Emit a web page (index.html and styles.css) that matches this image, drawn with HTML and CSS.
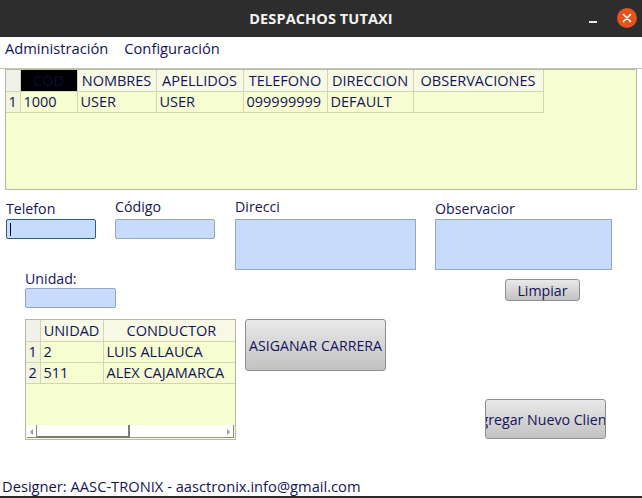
FILE: index.html
```html
<!DOCTYPE html>
<html lang="es">
<head>
<meta charset="utf-8">
<title>DESPACHOS TUTAXI</title>
<link rel="stylesheet" href="styles.css">
</head>
<body>
<div class="window">
  <header class="titlebar">
    <span class="title">DESPACHOS TUTAXI</span>
    <span class="minimize"></span>
    <span class="close">
      <svg width="10" height="10" viewBox="0 0 10 10"><path d="M1.5 1.5 L8.5 8.5 M8.5 1.5 L1.5 8.5" stroke="#fff" stroke-width="1.6" stroke-linecap="round"/></svg>
    </span>
  </header>
  <nav class="menubar">
    <span class="menu-item">Administración</span>
    <span class="menu-item">Configuración</span>
  </nav>
  <main class="main">
    <section class="grid-panel top-panel">
      <table class="grid top-grid">
        <colgroup>
          <col class="c-rh"><col class="c-cod"><col class="c-nom"><col class="c-ape"><col class="c-tel"><col class="c-dir"><col class="c-obs">
        </colgroup>
        <thead>
          <tr><th class="rh"></th><th class="sel">COD</th><th>NOMBRES</th><th>APELLIDOS</th><th>TELEFONO</th><th>DIRECCION</th><th>OBSERVACIONES</th></tr>
        </thead>
        <tbody>
          <tr><td class="rh">1</td><td>1000</td><td>USER</td><td>USER</td><td>099999999</td><td>DEFAULT</td><td></td></tr>
        </tbody>
      </table>
    </section>

    <section class="row1">
      <div class="field f-tel">
        <label class="lbl">Telefon</label>
        <div class="input focused"><span class="caret"></span></div>
      </div>
      <div class="field f-cod">
        <label class="lbl">Código</label>
        <div class="input"></div>
      </div>
      <div class="field f-dir">
        <label class="lbl">Direcci</label>
        <div class="input area"></div>
      </div>
      <div class="field f-obs">
        <label class="lbl">Observacior</label>
        <div class="input area"></div>
      </div>
    </section>

    <section class="row2">
      <div class="field f-uni">
        <label class="lbl">Unidad:</label>
        <div class="input"></div>
      </div>
      <button class="btn btn-limpiar"><span>Limpiar</span></button>
    </section>

    <section class="row3">
      <div class="grid-panel low-panel">
        <table class="grid low-grid">
          <colgroup><col class="c-rh"><col class="c-uni"><col class="c-con"></colgroup>
          <thead><tr><th class="rh"></th><th>UNIDAD</th><th>CONDUCTOR</th></tr></thead>
          <tbody>
            <tr><td class="rh">1</td><td>2</td><td>LUIS ALLAUCA</td></tr>
            <tr><td class="rh">2</td><td>511</td><td>ALEX CAJAMARCA</td></tr>
          </tbody>
        </table>
        <div class="hscroll">
          <span class="arrow left"></span>
          <span class="thumb"></span>
          <span class="track"></span>
          <span class="arrow right"></span>
        </div>
      </div>
      <button class="btn btn-asignar"><span>ASIGANAR CARRERA</span></button>
      <button class="btn btn-agregar"><span>Agregar Nuevo Cliente</span></button>
    </section>
  </main>
  <footer class="footer">Designer: AASC-TRONIX - aasctronix.info@gmail.com</footer>
</div>
</body>
</html>
```

FILE: styles.css
```css
* { box-sizing: border-box; }
html, body { margin: 0; padding: 0; }
body {
  width: 642px;
  height: 498px;
  overflow: hidden;
  background: #ffffff;
  font-family: "Open Sans", "DejaVu Sans", sans-serif;
  font-size: 14.5px;
  color: #14145a;
}
.window { display: flex; flex-direction: column; height: 498px; }

.titlebar {
  height: 37px;
  background: #2d2d2d;
  display: flex;
  align-items: center;
  justify-content: center;
  position: relative;
  flex: none;
}
.title {
  color: #f2f2f2;
  font-weight: 700;
  font-size: 14.5px;
  letter-spacing: 0.1px;
}
.minimize {
  position: absolute;
  left: 589px;
  top: 21px;
  width: 8px;
  height: 2px;
  background: #e8e8e8;
}
.close {
  position: absolute;
  left: 617px;
  top: 8px;
  width: 20px;
  height: 20px;
  border-radius: 50%;
  background: #e5531f;
  display: flex;
  align-items: center;
  justify-content: center;
}

.menubar {
  height: 32px;
  flex: none;
  display: flex;
  align-items: flex-start;
  padding: 1px 0 0 5px;
  gap: 16px;
  border-bottom: 1px solid #c4c4b4;
  font-size: 14.7px;
}
.menu-item { line-height: 20px; color: #14145a; }

.main { padding: 0 5px; flex: none; }

.grid-panel {
  background: #f6fdd0;
  border: 1px solid #b9b9a6;
  overflow: hidden;
  position: relative;
}
.top-panel { width: 632px; height: 121px; }

.grid {
  border-collapse: collapse;
  table-layout: fixed;
  font-size: 14.5px;
  color: #14145a;
}
.grid th, .grid td {
  height: 21px;
  padding: 0 3px;
  border: 1px solid #d2d4b4;
  white-space: nowrap;
  overflow: hidden;
  line-height: 19px;
  color: #14145a;
}
.grid th { font-weight: 400; text-align: center; background: #f7f9e4; }
.grid td { text-align: left; }
.grid .rh { padding: 0; text-align: center; background: #f2f5dc; }
.grid thead .rh { background: #f1f1ea; }
.grid th.sel { background: #000000; color: #0c0c44; }
.grid tr > :first-child { border-left: none; }
.grid thead th { border-top: none; }

.top-grid { width: 537px; }
.top-grid .c-rh { width: 14px; }
.top-grid .c-cod { width: 57px; }
.top-grid .c-nom { width: 79px; }
.top-grid .c-ape { width: 87px; }
.top-grid .c-tel { width: 84px; }
.top-grid .c-dir { width: 86px; }
.top-grid .c-obs { width: 130px; }
.top-grid th { padding: 0; }

.row1 { display: flex; padding-left: 1px; height: 80px; }
.field { display: flex; flex-direction: column; }
.lbl { font-size: 14.2px; line-height: 17px; color: #14145a; white-space: nowrap; }
.row1 .lbl { height: 29px; display: flex; align-items: flex-end; }
.f-tel { width: 90px; }
.f-tel .lbl { padding-bottom: 2px; }
.f-cod { width: 100px; margin-left: 19px; }
.f-cod .lbl { padding-bottom: 4px; }
.f-dir { width: 181px; margin-left: 20px; }
.f-dir .lbl { padding-bottom: 4px; }
.f-obs { width: 177px; margin-left: 19px; }
.f-obs .lbl { padding-bottom: 2px; }

.input {
  height: 20px;
  background: #c7dbfc;
  border: 1px solid #92a6c6;
  border-radius: 2px;
  position: relative;
}
.input.area { height: 51px; border-radius: 0; }
.input.focused { border-color: #2c5d8a; }
.caret {
  position: absolute;
  left: 3px;
  top: 3px;
  width: 1px;
  height: 13px;
  background: #000;
}

.row2 { display: flex; height: 38px; }
.f-uni { width: 91px; margin-left: 20px; }
.f-uni .lbl { height: 19px; }

.btn {
  font-family: inherit;
  font-size: 14.2px;
  color: #14145a;
  background: linear-gradient(#e9e9e9, #c2c2c2);
  border: 1px solid #8e8e8e;
  border-radius: 3px;
  padding: 0;
  display: flex;
  align-items: center;
  justify-content: center;
  overflow: hidden;
  white-space: nowrap;
}
.btn span { flex: none; }
.btn-limpiar { width: 75px; height: 22px; margin-left: 389px; margin-top: 9px; }

.row3 { display: flex; align-items: flex-start; margin-top: 11px; }
.low-panel { width: 211px; height: 121px; margin-left: 20px; }
.low-grid { width: 260px; }
.low-grid .c-rh { width: 14px; }
.low-grid .c-uni { width: 63px; }
.low-grid .c-con { width: 183px; }
.low-grid th { padding: 0; }
.low-grid th:last-child { text-align: left; padding-left: 23px; }

.hscroll {
  position: absolute;
  left: 1px;
  right: 1px;
  bottom: 1px;
  height: 13px;
  display: flex;
  background: #ffffff;
}
.arrow {
  width: 10px;
  height: 13px;
  flex: none;
  position: relative;
  border-right: 1px solid #8a8a8a;
  border-bottom: 1px solid #8a8a8a;
}
.arrow::after {
  content: "";
  position: absolute;
  top: 4px;
  left: 3px;
  border-top: 3px solid transparent;
  border-bottom: 3px solid transparent;
}
.arrow.left::after { border-right: 3px solid #9a9a9a; }
.arrow.right::after { border-left: 3px solid #9a9a9a; }
.thumb {
  width: 93px;
  flex: none;
  border-right: 2px solid #7a7a7a;
  border-bottom: 2px solid #7a7a7a;
}
.track { flex: 1; border-bottom: 1px solid #9a9a9a; }

.btn-asignar { width: 141px; height: 52px; margin-left: 9px; }
.btn-agregar { width: 121px; height: 40px; margin-left: 99px; margin-top: 80px; }

.footer {
  margin-top: auto;
  height: 21px;
  padding: 0 0 0 2px;
  font-size: 14.7px;
  line-height: 18px;
  color: #14145a;
  border-bottom: 2px solid #2a2a2a;
}
```
